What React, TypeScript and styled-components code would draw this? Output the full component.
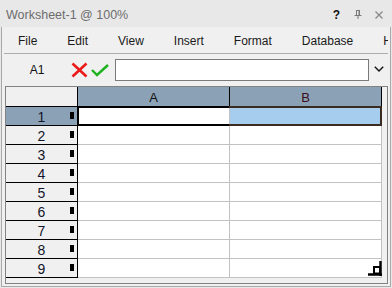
import React from 'react';
import styled, { createGlobalStyle } from 'styled-components';

const Global = createGlobalStyle`
  html, body { margin: 0; padding: 0; background: #ffffff; }
  body { font-family: "Liberation Sans", Arial, sans-serif; }
  #root { width: 392px; height: 288px; }
`;

const Window = styled.div`
  width: 392px;
  height: 288px;
  box-sizing: border-box;
  background: #e8e8e8;
  display: flex;
  flex-direction: column;
  overflow: hidden;
  font-family: "Liberation Sans", Arial, sans-serif;
`;

const TitleBar = styled.div`
  height: 27px;
  flex: none;
  display: flex;
  align-items: center;
  box-sizing: border-box;
  padding: 2px 3px 0 6px;
`;

const Title = styled.div`
  flex: 1;
  font-size: 12.5px;
  color: #6d6d6d;
  white-space: nowrap;
`;

const TitleButton = styled.div<{ $w: number }>`
  width: ${(p) => p.$w}px;
  height: 16px;
  display: flex;
  align-items: center;
  justify-content: center;
  font-size: 12px;
  font-weight: bold;
  color: #111;
`;

const Frame = styled.div`
  flex: 1;
  display: flex;
  flex-direction: column;
  margin: 0 1px 1px 1px;
  border: 1px solid #a9a9a9;
  border-top: none;
  padding: 0 2px 2px 2px;
  background: #f0f0f0;
  min-height: 0;
`;

const MenuBar = styled.div`
  height: 26px;
  flex: none;
  display: flex;
  align-items: center;
  gap: 30px;
  padding-left: 14px;
  border-bottom: 1px solid #acacac;
  overflow: hidden;
  white-space: nowrap;
`;

const MenuItem = styled.span`
  font-size: 12px;
  color: #1a1a1a;
  padding-top: 1px;
`;

const FormulaBar = styled.div`
  height: 32px;
  flex: none;
  display: flex;
  align-items: center;
`;

const NameBox = styled.div`
  width: 66px;
  text-align: center;
  font-size: 12px;
  color: #111;
`;

const IconButton = styled.div<{ $w: number; $ml: number }>`
  width: ${(p) => p.$w}px;
  margin-left: ${(p) => p.$ml}px;
  display: flex;
  align-items: center;
  justify-content: center;
`;

const FormulaInput = styled.div`
  width: 254px;
  height: 22px;
  box-sizing: border-box;
  margin-left: 6px;
  border: 1px solid #7a7a7a;
  background: #ffffff;
`;

const Chevron = styled.div`
  flex: 1;
  display: flex;
  justify-content: center;
  align-items: center;
  padding-bottom: 2px;
`;

const Viewport = styled.div`
  flex: 1;
  margin-left: 1px;
  border: 1px solid #828282;
  background: #f0f0f0;
  position: relative;
  overflow: hidden;
`;

const Sheet = styled.div`
  display: grid;
  grid-template-columns: 72px 152px 152px;
  grid-template-rows: 20px repeat(9, 19px);
`;

const Corner = styled.div`
  box-sizing: border-box;
  background: #f0f0f0;
  border-right: 1px solid #000;
  border-bottom: 1px solid #000;
`;

const ColHeader = styled.div<{ $color: string }>`
  box-sizing: border-box;
  background: #8ba2b6;
  border-right: 1px solid #000;
  border-bottom: 1px solid #000;
  display: flex;
  align-items: center;
  justify-content: center;
  font-size: 13px;
  color: ${(p) => p.$color};
  padding-top: 1px;
`;

const RowHeader = styled.div<{ $selected: boolean }>`
  box-sizing: border-box;
  position: relative;
  background: ${(p) => (p.$selected ? '#8ba2b6' : '#f0f0f0')};
  border-right: 1px solid #000;
  border-bottom: 1px solid #000;
  display: flex;
  align-items: center;
  justify-content: center;
  font-size: 14px;
  color: #14142a;
  padding-top: 1px;
`;

const RowMarker = styled.span`
  position: absolute;
  right: 3px;
  top: 5px;
  width: 4px;
  height: 7px;
  background: #000;
`;

const Cell = styled.div<{ $bg: string }>`
  box-sizing: border-box;
  background: ${(p) => p.$bg};
  border-right: 1px solid #c2c2c2;
  border-bottom: 1px solid #c2c2c2;
`;

const RangeOutline = styled.div`
  position: absolute;
  left: 71px;
  top: 19px;
  width: 305px;
  height: 20px;
  box-sizing: border-box;
  border: 2px solid #3b2a1f;
  pointer-events: none;
`;

const ActiveOutline = styled.div`
  position: absolute;
  left: 71px;
  top: 19px;
  width: 152px;
  height: 20px;
  box-sizing: border-box;
  border: 2px solid #000;
  border-right: none;
  pointer-events: none;
`;

const ResizeGrip = styled.svg`
  position: absolute;
  left: 362px;
  top: 174px;
`;

const rows = [1, 2, 3, 4, 5, 6, 7, 8, 9];

export default function App() {
  return (
    <>
      <Global />
      <Window>
        <TitleBar>
          <Title>Worksheet-1 @ 100%</Title>
          <TitleButton $w={21}>?</TitleButton>
          <TitleButton $w={21}>
            <svg width="8" height="9" viewBox="0 0 8 9">
              <path d="M2.5 0.5 V5 M5.5 0.5 V5 M2 0.5 H6 M0.5 5.5 H7.5 M4 5.5 V9" stroke="#7a7a7a" strokeWidth="1" fill="none" />
              <rect x="4.5" y="0.5" width="1.2" height="4.5" fill="#7a7a7a" />
            </svg>
          </TitleButton>
          <TitleButton $w={21}>
            <svg width="8" height="8" viewBox="0 0 8 8">
              <path d="M0.5 0.5 L7.5 7.5 M7.5 0.5 L0.5 7.5" stroke="#8a8a8a" strokeWidth="1.3" />
            </svg>
          </TitleButton>
        </TitleBar>
        <Frame>
          <MenuBar>
            {['File', 'Edit', 'View', 'Insert', 'Format', 'Database', 'Help'].map((m) => (
              <MenuItem key={m}>{m}</MenuItem>
            ))}
          </MenuBar>
          <FormulaBar>
            <NameBox>A1</NameBox>
            <IconButton $w={17} $ml={1}>
              <svg width="17" height="16" viewBox="0 0 17 16">
                <path d="M1.5 1.5 L15.5 14.5 M15.5 1.5 L1.5 14.5" stroke="#ec1b1b" strokeWidth="2.6" strokeLinecap="butt" />
              </svg>
            </IconButton>
            <IconButton $w={18} $ml={3}>
              <svg width="18" height="13" viewBox="0 0 18 13">
                <path d="M1 6 L6 11 L17 1" stroke="#1fb21f" strokeWidth="2.4" fill="none" />
              </svg>
            </IconButton>
            <FormulaInput />
            <Chevron>
              <svg width="10" height="6" viewBox="0 0 10 6">
                <path d="M0.8 0.8 L5 5 L9.2 0.8" stroke="#111" strokeWidth="1.4" fill="none" />
              </svg>
            </Chevron>
          </FormulaBar>
          <Viewport>
            <Sheet>
              <Corner />
              <ColHeader $color="#111">A</ColHeader>
              <ColHeader $color="#3a0d18">B</ColHeader>
              {rows.map((r) => (
                <React.Fragment key={r}>
                  <RowHeader $selected={r === 1}>
                    {r}
                    <RowMarker />
                  </RowHeader>
                  <Cell $bg="#ffffff" />
                  <Cell $bg={r === 1 ? '#a6cdee' : '#ffffff'} />
                </React.Fragment>
              ))}
            </Sheet>
            <RangeOutline />
            <ActiveOutline />
            <ResizeGrip width="14" height="15" viewBox="0 0 14 15">
              <path d="M0 13.5 H14 M12.5 0 V15" stroke="#000" strokeWidth="2.4" />
              <rect x="6" y="6" width="6" height="6.5" stroke="#000" strokeWidth="2" fill="none" />
            </ResizeGrip>
          </Viewport>
        </Frame>
      </Window>
    </>
  );
}
